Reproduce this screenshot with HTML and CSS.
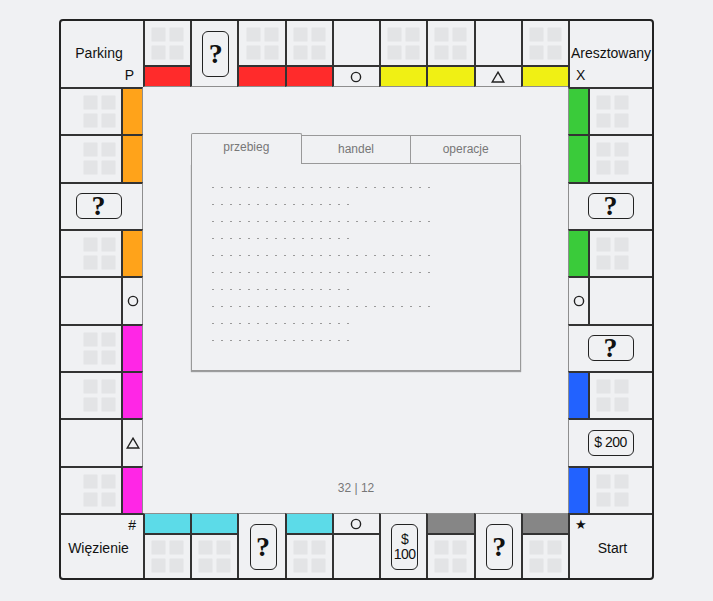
FILE: index.html
```html
<!DOCTYPE html>
<html lang="pl">
<head>
<meta charset="utf-8">
<title>Plansza</title>
<link rel="stylesheet" href="styles.css">
</head>
<body>
<div class="board">
  <div class="row top">
    <div class="corner corner-tl"><span class="label">Parking</span><span class="mark">P</span></div>
    <div class="cell"><div class="sq"><i></i><i></i><i></i><i></i></div><div class="band red"></div></div>
    <div class="cell card-cell"><div class="card v"><span class="q">?</span></div></div>
    <div class="cell"><div class="sq"><i></i><i></i><i></i><i></i></div><div class="band red"></div></div>
    <div class="cell"><div class="sq"><i></i><i></i><i></i><i></i></div><div class="band red"></div></div>
    <div class="cell"><div class="sq"></div><div class="band sym"><svg class="ico" viewBox="0 0 12 12"><circle cx="6" cy="6" r="4.6"/></svg></div></div>
    <div class="cell"><div class="sq"><i></i><i></i><i></i><i></i></div><div class="band yellow"></div></div>
    <div class="cell"><div class="sq"><i></i><i></i><i></i><i></i></div><div class="band yellow"></div></div>
    <div class="cell"><div class="sq"></div><div class="band sym"><svg class="ico tri" viewBox="0 0 14 12"><polygon points="7,1.2 12.8,11 1.2,11"/></svg></div></div>
    <div class="cell"><div class="sq"><i></i><i></i><i></i><i></i></div><div class="band yellow"></div></div>
    <div class="corner corner-tr"><span class="label">Aresztowany</span><span class="mark">X</span></div>
  </div>

  <div class="middle">
    <div class="col left">
      <div class="scell"><div class="sq"><i></i><i></i><i></i><i></i></div><div class="stripe orange"></div></div>
      <div class="scell"><div class="sq"><i></i><i></i><i></i><i></i></div><div class="stripe orange"></div></div>
      <div class="scell card-cell"><div class="card h"><span class="q">?</span></div></div>
      <div class="scell"><div class="sq"><i></i><i></i><i></i><i></i></div><div class="stripe orange"></div></div>
      <div class="scell"><div class="sq"></div><div class="stripe sym"><svg class="ico" viewBox="0 0 12 12"><circle cx="6" cy="6" r="4.6"/></svg></div></div>
      <div class="scell"><div class="sq"><i></i><i></i><i></i><i></i></div><div class="stripe magenta"></div></div>
      <div class="scell"><div class="sq"><i></i><i></i><i></i><i></i></div><div class="stripe magenta"></div></div>
      <div class="scell"><div class="sq"></div><div class="stripe sym"><svg class="ico tri" viewBox="0 0 14 12"><polygon points="7,1.2 12.8,11 1.2,11"/></svg></div></div>
      <div class="scell"><div class="sq"><i></i><i></i><i></i><i></i></div><div class="stripe magenta"></div></div>
    </div>

    <div class="center">
      <div class="panel">
        <div class="tabs">
          <div class="tab active">przebieg</div>
          <div class="tab">handel</div>
          <div class="tab">operacje</div>
        </div>
        <div class="panel-body">
          <div class="dots long"></div>
          <div class="dots short"></div>
          <div class="dots long"></div>
          <div class="dots short"></div>
          <div class="dots long"></div>
          <div class="dots long"></div>
          <div class="dots short"></div>
          <div class="dots long"></div>
          <div class="dots short"></div>
          <div class="dots short"></div>
        </div>
      </div>
      <div class="counter">32 | 12</div>
    </div>

    <div class="col right">
      <div class="scell"><div class="stripe green"></div><div class="sq"><i></i><i></i><i></i><i></i></div></div>
      <div class="scell"><div class="stripe green"></div><div class="sq"><i></i><i></i><i></i><i></i></div></div>
      <div class="scell card-cell"><div class="card h"><span class="q">?</span></div></div>
      <div class="scell"><div class="stripe green"></div><div class="sq"><i></i><i></i><i></i><i></i></div></div>
      <div class="scell"><div class="stripe sym"><svg class="ico" viewBox="0 0 12 12"><circle cx="6" cy="6" r="4.6"/></svg></div><div class="sq"></div></div>
      <div class="scell card-cell"><div class="card h"><span class="q">?</span></div></div>
      <div class="scell"><div class="stripe blue"></div><div class="sq"><i></i><i></i><i></i><i></i></div></div>
      <div class="scell card-cell"><div class="card h money">$ 200</div></div>
      <div class="scell"><div class="stripe blue"></div><div class="sq"><i></i><i></i><i></i><i></i></div></div>
    </div>
  </div>

  <div class="row bottom">
    <div class="corner corner-bl"><span class="mark">#</span><span class="label">Więzienie</span></div>
    <div class="cell"><div class="band cyan"></div><div class="sq"><i></i><i></i><i></i><i></i></div></div>
    <div class="cell"><div class="band cyan"></div><div class="sq"><i></i><i></i><i></i><i></i></div></div>
    <div class="cell card-cell"><div class="card v"><span class="q">?</span></div></div>
    <div class="cell"><div class="band cyan"></div><div class="sq"><i></i><i></i><i></i><i></i></div></div>
    <div class="cell"><div class="band sym"><svg class="ico" viewBox="0 0 12 12"><circle cx="6" cy="6" r="4.6"/></svg></div><div class="sq"></div></div>
    <div class="cell card-cell"><div class="card v money">$<br>100</div></div>
    <div class="cell"><div class="band grey"></div><div class="sq"><i></i><i></i><i></i><i></i></div></div>
    <div class="cell card-cell"><div class="card v"><span class="q">?</span></div></div>
    <div class="cell"><div class="band grey"></div><div class="sq"><i></i><i></i><i></i><i></i></div></div>
    <div class="corner corner-br"><span class="mark">★</span><span class="label">Start</span></div>
  </div>
</div>
</body>
</html>
```

FILE: styles.css
```css
* { box-sizing: border-box; }

html, body {
  margin: 0;
  background: #f0f1f3;
}

body {
  padding: 19px 0 0 59px;
  font-family: "Liberation Sans", Arial, sans-serif;
  color: #111;
}

.board {
  width: 595px;
  height: 561px;
  border: 2px solid #222;
  border-radius: 4px;
  display: flex;
  flex-direction: column;
  background: #f0f1f3;
}

.row {
  display: flex;
}
.row.top { height: 66px; }
.row.bottom { height: 65px; }

.middle {
  flex: 1;
  display: flex;
  min-height: 0;
}

/* corners */
.corner {
  display: grid;
  font-size: 14px;
  line-height: 16px;
}
.corner-tl {
  width: 82px;
  grid-template-rows: 1fr auto 1fr;
  padding: 1px 9px 4px 0;
}
.corner-tl .label { grid-row: 2; justify-self: center; margin-left: 3px; }
.corner-tl .mark { grid-row: 3; justify-self: end; align-self: end; }

.corner-tr {
  width: 84px;
  border-left: 2px solid #333;
  grid-template-rows: 1fr auto 1fr;
  padding: 1px 0 4px 6px;
}
.corner-tr .label { grid-row: 2; justify-self: center; margin-left: -6px; }
.corner-tr .mark { grid-row: 3; justify-self: start; align-self: end; }

.corner-bl {
  width: 82px;
  border-top: 2px solid #333;
  grid-template-rows: 1fr auto 1fr;
  padding: 2px 7px 0 0;
}
.corner-bl .mark { grid-row: 1; justify-self: end; align-self: start; }
.corner-bl .label { grid-row: 2; justify-self: center; margin-left: 0; }

.corner-br {
  width: 84px;
  border-top: 2px solid #333;
  border-left: 2px solid #333;
  grid-template-rows: 1fr auto 1fr;
  padding: 2px 0 0 5px;
}
.corner-br .mark { grid-row: 1; justify-self: start; align-self: start; font-size: 13px; }
.corner-br .label { grid-row: 2; justify-self: center; margin-left: -2px; }

/* top / bottom cells */
.cell {
  flex: 1;
  min-width: 0;
  border-left: 2px solid #333;
  display: flex;
  flex-direction: column;
}
.top .cell { border-bottom: 1px solid #8e8e8e; }
.bottom .cell { border-top: 1px solid #8e8e8e; }

.band {
  height: 21px;
  display: flex;
  align-items: center;
  justify-content: center;
}
.top .band { border-top: 2px solid #333; }
.bottom .band { height: 21px; border-bottom: 2px solid #333; }

.sq {
  flex: 1;
  display: grid;
  grid-template-columns: 15px 15px;
  grid-template-rows: 15px 15px;
  gap: 3px;
  align-content: center;
  justify-content: center;
}
.sq i {
  display: block;
  background: #e3e4e6;
  border: 1px solid #e9eaec;
  border-radius: 2px;
}

/* side columns */
.col {
  display: flex;
  flex-direction: column;
}
.col.left { width: 82px; }
.col.right { width: 84px; }

.scell {
  flex: 1;
  min-height: 0;
  display: flex;
  border-top: 2px solid #333;
}
.left .scell { border-right: 1px solid #8e8e8e; }
.right .scell { border-left: 1px solid #8e8e8e; }

.stripe {
  width: 21px;
  display: flex;
  align-items: center;
  justify-content: center;
}
.left .stripe { border-left: 2px solid #333; }
.right .stripe { border-right: 2px solid #333; }

.left .sq { justify-content: end; padding-right: 5px; }
.right .sq { justify-content: start; padding-left: 6px; }

.red { background: #ff2b2b; }
.yellow { background: #f0f014; }
.orange { background: #ffa31a; }
.green { background: #3acb3a; }
.magenta { background: #ff26e6; }
.blue { background: #2262ff; }
.cyan { background: #5cdbe8; }
.grey { background: #868686; }

.ico {
  width: 12px;
  height: 12px;
  fill: none;
  stroke: #222;
  stroke-width: 1.4;
}
.ico.tri { width: 14px; }

/* cards */
.card-cell {
  align-items: center;
  justify-content: center;
}
.card {
  border: 1px solid #222;
  border-radius: 6px;
  display: flex;
  align-items: center;
  justify-content: center;
  text-align: center;
}
.card.v { width: 27px; height: 46px; }
.card.h { width: 46px; height: 26px; }
.left .card.h { margin-right: 6px; }
.top .card.v { margin-left: 2px; }
.bottom .card.v { margin-left: 2px; margin-top: 2px; }
.q {
  font-family: "Liberation Serif", "Times New Roman", serif;
  font-weight: bold;
  font-size: 28px;
  line-height: 28px;
}
.money {
  font-size: 14px;
  line-height: 15px;
  letter-spacing: -0.5px;
}

/* center */
.center {
  flex: 1;
  min-width: 0;
  display: flex;
  flex-direction: column;
  padding: 46px 47px 18px 48px;
}
.panel {
  display: flex;
  flex-direction: column;
  height: 238px;
}
.tabs {
  display: flex;
  align-items: flex-end;
}
.tab {
  flex: 1;
  height: 29px;
  border: 1px solid #999;
  margin-left: -1px;
  font-size: 12px;
  color: #777;
  text-align: center;
  line-height: 27px;
  background: #f0f1f3;
}
.tab:first-child { margin-left: 0; }
.tab.active {
  height: 31px;
  border-bottom: none;
  border-radius: 2px 2px 0 0;
  line-height: 27px;
}
.panel-body {
  flex: 1;
  border: 1px solid #999;
  border-top: none;
  box-shadow: 0 1px 1px rgba(0,0,0,0.35);
  padding: 23px 0 0 20px;
  display: flex;
  flex-direction: column;
  gap: 16px;
}
.dots {
  height: 1px;
  background: linear-gradient(to right, #9a9a9a 2px, transparent 2px) 0 0 / 9px 1px repeat-x;
}
.dots.long { width: 218px; }
.dots.short { width: 137px; }

.counter {
  margin-top: auto;
  text-align: center;
  font-size: 12px;
  line-height: 14px;
  color: #777;
}
```
